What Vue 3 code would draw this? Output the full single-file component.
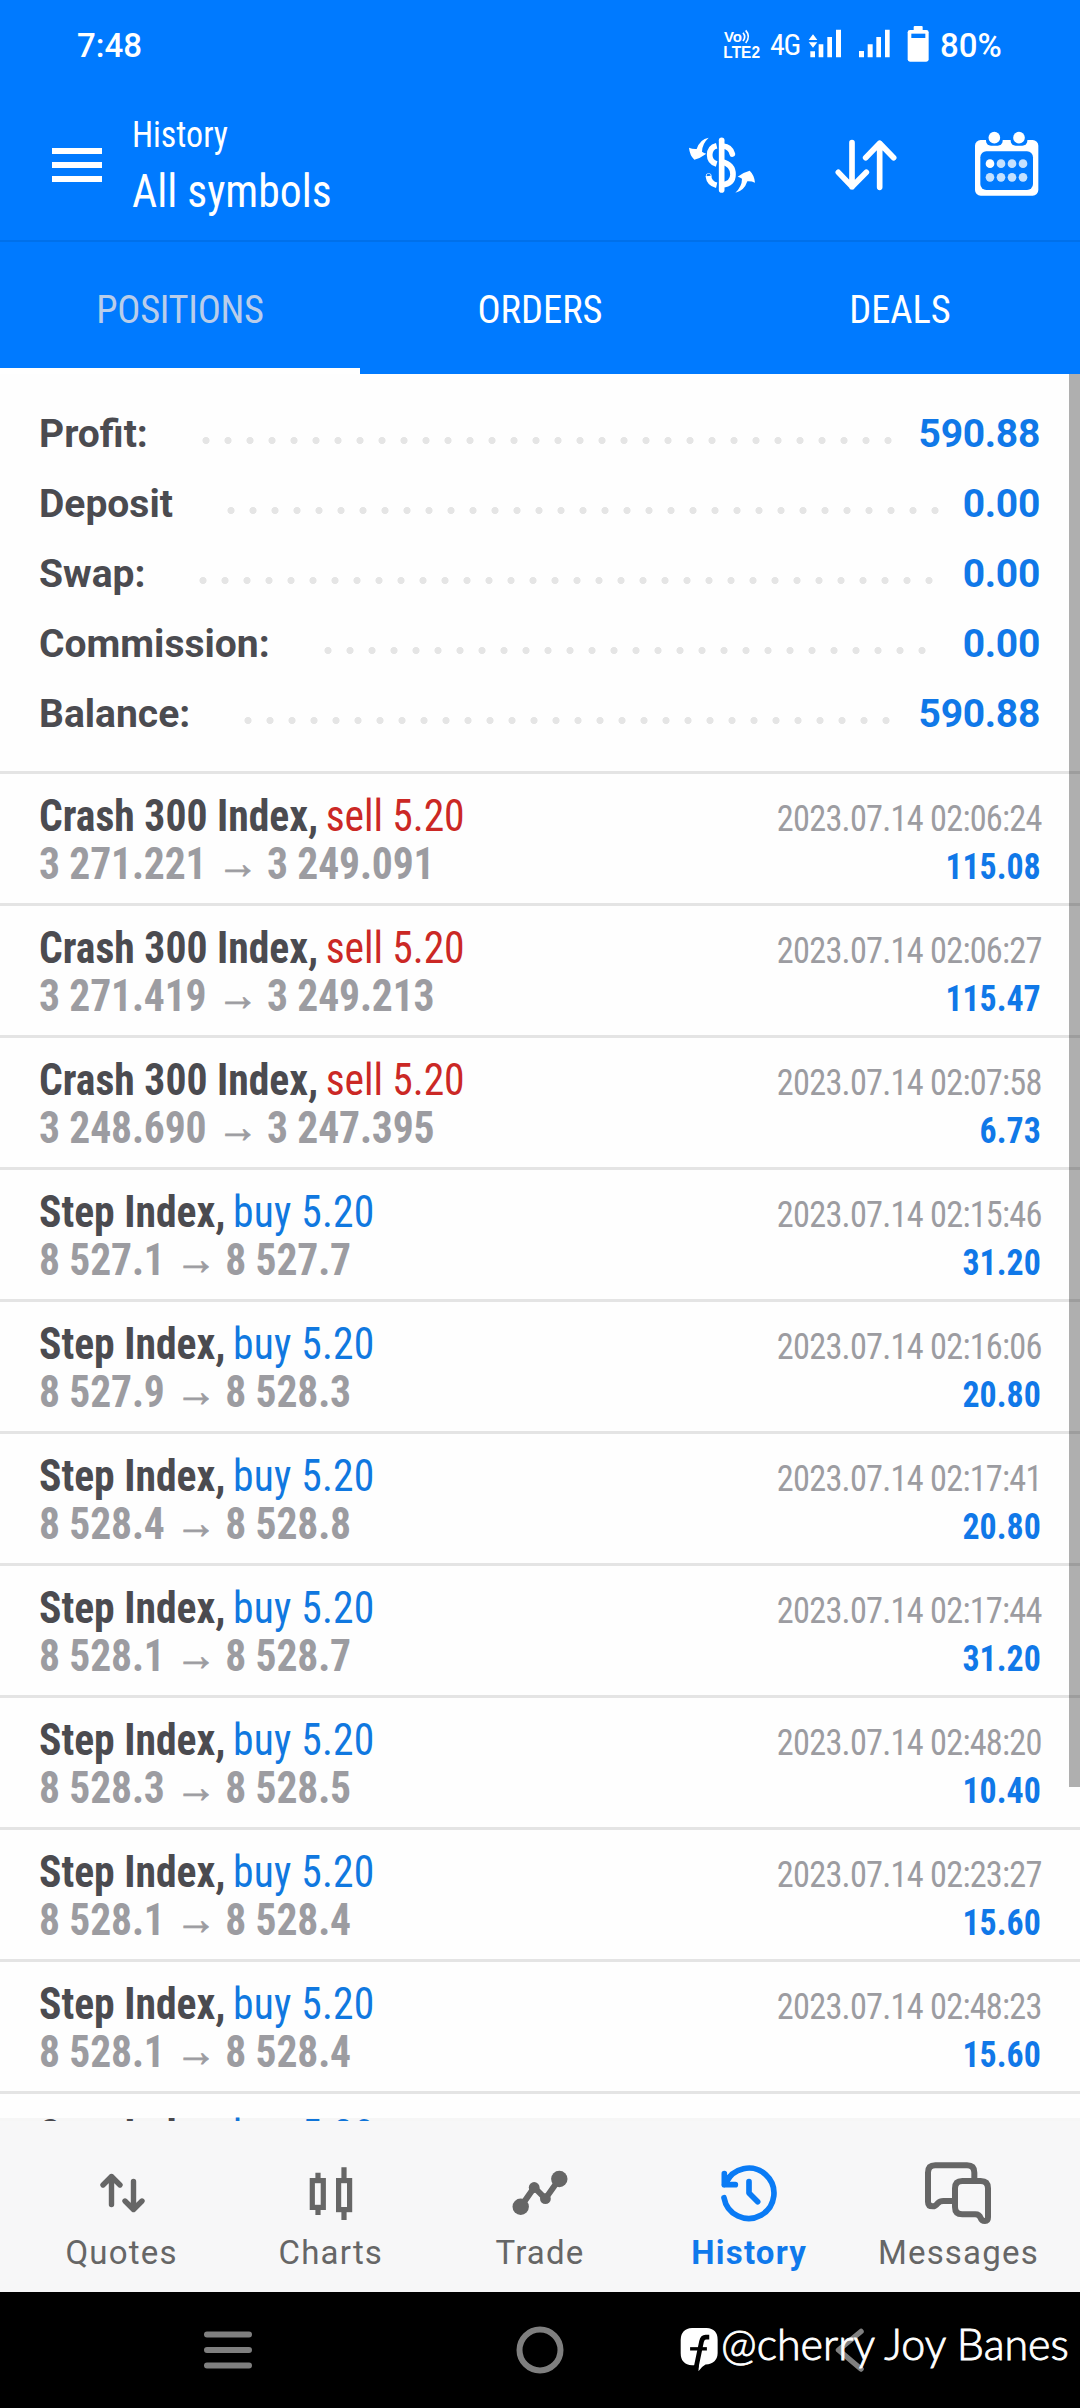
<script setup>
const summary = [
  { label: 'Profit:', value: '590.88', dots: 32 },
  { label: 'Deposit', value: '0.00', dots: 33 },
  { label: 'Swap:', value: '0.00', dots: 34 },
  { label: 'Commission:', value: '0.00', dots: 28 },
  { label: 'Balance:', value: '590.88', dots: 30 },
]

const CRASH = 'Crash 300 Index,'
const STEP = 'Step Index,'
const positions = [
  [CRASH, 'sell', '3 271.221', '3 249.091', '02:06:24', '115.08'],
  [CRASH, 'sell', '3 271.419', '3 249.213', '02:06:27', '115.47'],
  [CRASH, 'sell', '3 248.690', '3 247.395', '02:07:58', '6.73'],
  [STEP, 'buy', '8 527.1', '8 527.7', '02:15:46', '31.20'],
  [STEP, 'buy', '8 527.9', '8 528.3', '02:16:06', '20.80'],
  [STEP, 'buy', '8 528.4', '8 528.8', '02:17:41', '20.80'],
  [STEP, 'buy', '8 528.1', '8 528.7', '02:17:44', '31.20'],
  [STEP, 'buy', '8 528.3', '8 528.5', '02:48:20', '10.40'],
  [STEP, 'buy', '8 528.1', '8 528.4', '02:23:27', '15.60'],
  [STEP, 'buy', '8 528.1', '8 528.4', '02:48:23', '15.60'],
].map(([symbol, side, open, close, time, profit]) => ({ symbol, side, open, close, time, profit }))
</script>

<template>
  <div class="screen">
    <header class="top">
      <div class="status">
        <span class="clock">7:48</span>
        <svg class="volte" viewBox="249 60 126 150" fill="#fff">
          <text x="255" y="126" font-size="43" font-weight="700" textLength="54" lengthAdjust="spacingAndGlyphs">Vo</text>
          <text x="253" y="173" font-size="47" font-weight="700" textLength="110" lengthAdjust="spacingAndGlyphs">LTE2</text>
          <path d="M312 98q10 12 0 25M320 91q16 18 0 38" fill="none" stroke="#fff" stroke-width="5" />
        </svg>
        <span class="net">4G</span>
        <svg class="signal" viewBox="504 60 255 150" fill="#fff">
          <path d="M522 103l13 17h-26zM522 143l13-16h-26z" />
          <path d="M514 154h14v18h-14zM539 133h14v39h-14zM565 111h14v61h-14zM591 89h15v83h-15z" />
          <path d="M660 153h15v19h-15zM686 133h15v39h-15zM712 111h14v61h-14zM738 89h14v83h-14z" />
        </svg>
        <svg class="battery" viewBox="802 60 72 150" fill="#fff">
          <rect x="825" y="78" width="27" height="18" rx="3" />
          <rect x="807" y="90" width="63" height="95" rx="7" />
          <rect x="818" y="101" width="42" height="13" fill="#007aff" />
        </svg>
        <span class="percent">80%</span>
      </div>

      <div class="appbar">
        <div class="burger"><i></i><i></i><i></i></div>
        <div class="titles">
          <div class="sub">History</div>
          <div class="title">All symbols</div>
        </div>
        <div class="actions">
          <svg viewBox="0 0 270 270">
            <g fill="none" stroke="#fff" stroke-width="17">
              <path d="M125 61V210" stroke-linecap="round" />
              <path d="M157 102Q152 80 128 78" stroke-linecap="round" />
              <path d="M110 77Q89 82 89 105Q89 126 110 132" />
              <path d="M126 125Q159 133 159 163Q159 192 126 195" />
              <path d="M85 168Q88 191 110 196" />
              <circle cx="86" cy="168" r="1" stroke-width="15" />
            </g>
            <g fill="#fff">
              <path d="M86 53Q60 57 50 87Q38 88 27 83Q29 106 43 119Q60 115 79 101Q72 99 66 95Q66 72 86 53Z" />
              <path transform="rotate(180 126 135.500)" d="M86 53Q60 57 50 87Q38 88 27 83Q29 106 43 119Q60 115 79 101Q72 99 66 95Q66 72 86 53Z" />
            </g>
          </svg>
          <svg viewBox="540 360 270 270" fill="none" stroke="#fff" stroke-width="17" stroke-linecap="round" stroke-linejoin="round">
            <path d="M633 428V560M592 517L633 560L676 517" />
            <path d="M716 562V430M674 473L716 430L758 473" />
          </svg>
          <svg viewBox="966 360 270 270">
            <rect x="1005" y="420" width="190" height="167" rx="17" fill="#fff" />
            <rect x="1021" y="454" width="158" height="116" rx="18" fill="#007aff" />
            <rect x="1038" y="395" width="50" height="42" rx="15" fill="#007aff" />
            <rect x="1112" y="395" width="50" height="42" rx="15" fill="#007aff" />
            <circle cx="1063" cy="413" r="17.500" fill="#fff" />
            <circle cx="1137" cy="413" r="17.500" fill="#fff" />
            <circle cx="1050" cy="491" r="13" fill="#fff" />
            <g fill="#c4e1ff">
              <circle v-for="x in [1083, 1116, 1149]" :key="x" :cx="x" cy="491" r="13" />
              <circle v-for="x in [1050, 1083, 1116, 1149]" :key="x" :cx="x" cy="532" r="13" />
            </g>
          </svg>
        </div>
      </div>

      <nav class="tabs">
        <div class="tab active">POSITIONS</div>
        <div class="tab">ORDERS</div>
        <div class="tab">DEALS</div>
      </nav>
    </header>

    <main class="content">
      <section class="summary">
        <div v-for="s in summary" :key="s.label" class="srow">
          <span class="slabel">{{ s.label }}</span>
          <span class="leader" :style="{ width: s.dots * 22 + 'px' }"></span>
          <span class="svalue">{{ s.value }}</span>
        </div>
      </section>

      <article v-for="(p, i) in positions" :key="i" class="row">
        <div class="left">
          <div class="name"><b>{{ p.symbol }}</b><span :class="p.side">{{ p.side }} 5.20</span></div>
          <div class="prices"><span>{{ p.open }}</span><span class="arrow">→</span><span>{{ p.close }}</span></div>
        </div>
        <div class="right">
          <div class="date">2023.07.14 {{ p.time }}</div>
          <div class="profit">{{ p.profit }}</div>
        </div>
      </article>
      <article class="row">
        <div class="left">
          <div class="name"><b>Step Index,</b><span class="buy">buy 5.20</span></div>
        </div>
      </article>
      <div class="scrollbar"></div>
    </main>

    <nav class="bottom">
      <div class="item">
        <svg viewBox="71.500 2164 100 60" fill="none" stroke="#666" stroke-width="5.400" stroke-linecap="round" stroke-linejoin="round">
          <path d="M111 2204.500V2176.500M102.500 2185L111 2176.500L119.500 2185" />
          <path d="M133 2181.500V2209.500M124.500 2201L133 2209.500L141.500 2201" />
        </svg>
        <span>Quotes</span>
      </div>
      <div class="item">
        <svg viewBox="281 2164 100 60" fill="none" stroke="#666" stroke-width="5.200">
          <path d="M318 2172.700V2178M318 2210V2215M344 2167.300V2178M344 2212V2220" />
          <rect x="312.300" y="2180.600" width="11" height="26.800" />
          <rect x="338.600" y="2180.600" width="11" height="29" />
        </svg>
        <span>Charts</span>
      </div>
      <div class="item">
        <svg viewBox="490 2164 100 60" fill="#666">
          <path d="M520.700 2206.700L534.200 2187.500L545.400 2198.700L559.300 2179" fill="none" stroke="#666" stroke-width="6" />
          <circle cx="520.700" cy="2206.700" r="8.200" />
          <circle cx="534.200" cy="2187.500" r="5.400" />
          <circle cx="545.400" cy="2198.700" r="5.400" />
          <circle cx="559.300" cy="2179" r="8.200" />
        </svg>
        <span>Trade</span>
      </div>
      <div class="item on">
        <svg viewBox="-3 72 300 180" fill="none" stroke="#0a7bf5" stroke-width="17" stroke-linecap="round" stroke-linejoin="round">
          <path d="M72 173A75.500 75.500 0 1 0 77 130" />
          <path d="M73 101V134H106M73 134L88 112" />
          <path d="M147 125V159L173 185" />
        </svg>
        <span>History</span>
      </div>
      <div class="item">
        <svg viewBox="624 72 300 180" fill="none" stroke="#666" stroke-width="18">
          <path d="M823 118V98Q823 76 801 76H706Q684 76 684 98V185Q684 199 699 199Q706 199 713 190Q720 183 730 183H760" />
          <path d="M787 123H842Q864 123 864 145V232Q864 243 855 243Q845 243 842 234Q838 223 826 223H787Q765 223 765 201V145Q765 123 787 123Z" />
        </svg>
        <span>Messages</span>
      </div>
    </nav>

    <footer class="system">
      <svg viewBox="0 0 60 60" fill="none" stroke="#7f7f7f" stroke-width="6" stroke-linecap="round">
        <path d="M9 14.500H51M9 30H51M9 45.500H51" />
      </svg>
      <svg viewBox="0 0 60 60" fill="none" stroke="#7f7f7f" stroke-width="6">
        <circle cx="30" cy="30" r="20.500" />
      </svg>
      <svg viewBox="0 0 60 60" fill="none" stroke="#7f7f7f" stroke-width="5.500" stroke-linecap="round" stroke-linejoin="round">
        <path d="M39 11.500L16.500 30L39 49" />
      </svg>
      <div class="mark">
        <svg viewBox="28 52 116 134">
          <path d="M64 55H107Q140 57 140 90V130Q139 160 104 164Q92 170 83 184L84 166H64Q30 163 30 130V90Q31 57 64 55Z" fill="#fff" />
          <path d="M115 82H106Q95 81 92 95L76 172" fill="none" stroke="#000" stroke-width="14" />
          <path d="M58 117H108" stroke="#000" stroke-width="10" />
        </svg>
        <span>@cherry Joy Banes</span>
      </div>
    </footer>
  </div>
</template>

<style>
html, body { margin: 0; background: #000; }
</style>

<style scoped>
.screen {
  width: 1080px;
  height: 2408px;
  display: flex;
  flex-direction: column;
  overflow: hidden;
  background: #fefefe;
  font-family: Roboto, "Liberation Sans", sans-serif;
}
svg { display: block; flex: none; }
.top { background: #007aff; color: #fff; height: 374px; flex: none; }
.status { height: 92px; display: flex; align-items: center; padding-left: 77px; box-sizing: border-box; }
.clock { width: 645px; flex: none; margin-top: -2px; font-size: 33px; font-weight: 500; }
.volte { width: 42px; height: 50px; margin-top: -2px; font-family: "Liberation Sans", sans-serif; }
.net { width: 43px; flex: none; padding-left: 6px; box-sizing: border-box; margin-top: -4px; font-size: 30px; font-stretch: 75%; letter-spacing: -1.2px; white-space: nowrap; }
.signal { width: 85px; height: 50px; margin-top: -2px; }
.battery { width: 24px; height: 50px; margin: -2px 10px 0 14px; }
.percent { font-size: 33px; margin-top: -2px; font-weight: 500; }
.appbar { height: 148px; display: flex; border-bottom: 2px solid #0070ea; }
.burger { width: 50px; margin: 56px 31px 0 52px; display: flex; flex-direction: column; gap: 8px; }
.burger i { height: 6px; background: #fff; }
.titles { padding-top: 18px; flex: 1; font-stretch: 75%; white-space: nowrap; margin-left: -2px; }
.sub { font-size: 36px; line-height: 50px; transform: scaleX(0.945); transform-origin: 0 50%; padding-left: 1px; }
.title { font-size: 47px; line-height: 62px; transform: scaleX(0.93); transform-origin: 0 50%; padding-left: 1px; }
.actions { display: flex; gap: 51px; padding: 28px 28px 0 0; }
.actions svg { width: 90px; height: 90px; }
.tabs { height: 132px; display: flex; }
.tab { flex: 1; text-align: center; font-size: 38.5px; line-height: 135px; height: 132px; font-stretch: 75%; }
.tab.active { color: #b9cdea; letter-spacing: -0.3px; box-shadow: inset 0 -6px #fff; }

.content { height: 1747px; flex: none; overflow: hidden; position: relative; }
.summary { padding: 25px 40px 22px 39px; }
.srow { height: 70px; display: flex; align-items: center; font-size: 39px; font-weight: 700; }
.slabel { color: #4b4b50; }
.leader {
  height: 7px;
  margin: 12px 0 0 47px;
  background: radial-gradient(circle at 11px 3.5px, #e5e5e5 3.2px, transparent 3.9px) 0 0 / 22px 7px;
}
.svalue { margin-left: auto; color: #1078e8; letter-spacing: -0.3px; }
.row {
  height: 132px;
  box-sizing: border-box;
  border-top: 3px solid #e4e4e4;
  display: flex;
  justify-content: space-between;
  padding: 18px 39px 0 39px;
  line-height: 48px;
  font-stretch: 75%;
  white-space: nowrap;
}
.left { font-size: 44px; transform: scaleX(0.945); transform-origin: 0 50%; }
.name { color: #4b4b50; }
.name span { margin-left: 8px; }
.name .sell { color: #cb2825; letter-spacing: -0.1px; }
.name .buy { color: #1078e0; letter-spacing: 0.2px; }
.prices { font-weight: 700; color: #9c9ca1; letter-spacing: -0.15px; display: flex; }
.arrow { width: 44px; margin: -1px 9px 0 11px; letter-spacing: 0; text-align: center; -webkit-text-stroke: 0.8px #9c9ca1; }
.right { text-align: right; padding-top: 3px; transform: scaleX(0.94); transform-origin: 100% 50%; }
.date { font-size: 36.5px; color: #9c9ca1; letter-spacing: -0.8px; margin-right: -1px; }
.profit { font-size: 36px; font-weight: 700; color: #1078e8; }
.scrollbar { position: absolute; top: 0; right: 0; width: 11px; height: 1413px; background: rgba(0, 0, 0, 0.31); }

.bottom { position: relative; height: 171px; flex: none; background: #f7f7f8; display: flex; padding: 0 17px; }
.bottom::before { content: ""; position: absolute; left: 0; right: 0; top: -3px; height: 3px; background: rgba(0, 0, 0, 0.03); }
.item { flex: 1 1 0; padding-top: 43px; display: flex; flex-direction: column; align-items: center; color: #666; font-size: 33px; letter-spacing: 1.2px; line-height: 57px; }
.item svg { width: 100px; height: 60px; overflow: visible; }
.item.on { color: #0f79ec; font-weight: 700; }

.system { position: relative; height: 116px; flex: none; background: #000; display: flex; justify-content: space-between; padding: 0 198px; align-items: center; }
.system > svg { width: 60px; height: 60px; }
.mark { position: absolute; left: 679px; top: 27px; display: flex; color: #fff; font: 300 43px/50px Lato, "Noto Sans", sans-serif; white-space: nowrap; -webkit-text-stroke: 0.9px #fff; }
.mark svg { width: 39px; height: 45px; margin: 8px 2px 0 1px; }
</style>
